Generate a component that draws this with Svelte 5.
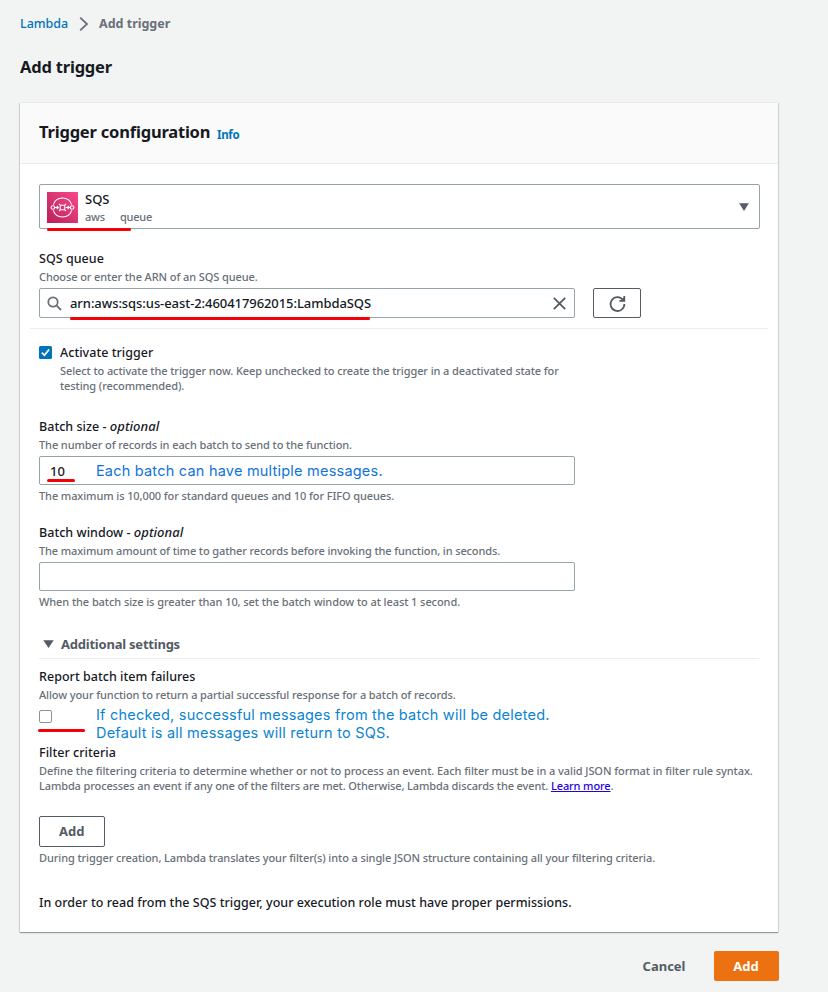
<script>
  let queueArn = $state('arn:aws:sqs:us-east-2:460417962015:LambdaSQS');
</script>

<main>
  <nav class="crumbs">
    <a href="#lambda">Lambda</a>
    <svg width="10" height="16" viewBox="0 0 10 16"><path d="M1.2 1.6 8 8 1.2 14.4" fill="none" stroke="#687078" stroke-width="1.8" /></svg>
    <span>Add trigger</span>
  </nav>
  <h1>Add trigger</h1>

  <section class="card">
    <header>
      <h2>Trigger configuration</h2>
      <a href="#info">Info</a>
    </header>

    <div class="body">
      <div class="select">
        <svg class="logo" width="31" height="31" viewBox="0 0 31 31">
          <defs>
            <linearGradient id="pink" x1="0" y1="1" x2="1" y2="0">
              <stop offset="0" stop-color="#b91f5c" />
              <stop offset="1" stop-color="#f8498b" />
            </linearGradient>
          </defs>
          <rect width="31" height="31" fill="url(#pink)" />
          <g fill="none" stroke="#fff" stroke-width="1.1">
            <path d="M6.3 12.6a9.7 9.7 0 0 1 18.4 0M6.3 18.4a9.7 9.7 0 0 0 18.4 0" />
            <circle cx="5.9" cy="15.5" r="1.8" />
            <circle cx="25.1" cy="15.5" r="1.8" />
            <path d="M7.7 15.5h3.6M9.8 14l1.5 1.5-1.5 1.5M18.8 15.5h4.2M20.7 14l1.5 1.5-1.5 1.5" />
            <path d="M12 12l1.5 1.3h4L19 12M12 19l1.5-1.3h4L19 19M13.2 13v5M17.8 13v5" />
          </g>
        </svg>
        <div class="choice">
          <strong>SQS</strong>
          <span class="tags"><span>aws</span><span>queue</span></span>
        </div>
        <svg width="10" height="8" viewBox="0 0 10 8"><path d="M0.6 0.4h8.8L5 7.6z" fill="#545b64" stroke="#545b64" stroke-width=".6" stroke-linejoin="round" /></svg>
        <i class="mark m1"></i>
      </div>

      <div class="label l-queue">SQS queue</div>
      <div class="desc">Choose or enter the ARN of an SQS queue.</div>
      <div class="row">
        <div class="input search">
          <svg width="15" height="15" viewBox="0 0 15 15" fill="none" stroke="#687078" stroke-width="1.8"><circle cx="6" cy="6" r="4.7" /><path d="M9.4 9.4 14 14" /></svg>
          <span class="arn">{queueArn}</span>
          <svg width="13" height="13" viewBox="0 0 13 13"><path d="M.8.8l11.4 11.4M12.2.8.8 12.2" stroke="#545b64" stroke-width="1.8" /></svg>
          <i class="mark m2"></i>
        </div>
        <button class="refresh" aria-label="Refresh">
          <svg width="17" height="17" viewBox="0 0 17 17"><path d="M14.2 5.2A6.9 6.9 0 1 0 15.4 9" fill="none" stroke="#545b64" stroke-width="1.8" /><path d="M15.3 1v4.9H10.4" fill="none" stroke="#545b64" stroke-width="1.8" /><path d="M15 2.2v3.5h-3.4z" fill="#545b64" /></svg>
        </button>
      </div>

      <hr class="wide" />

      <div class="activate">
        <svg width="13" height="13" viewBox="0 0 13 13"><rect width="13" height="13" rx="1.5" fill="#0073bb" /><path d="M2.8 6.6 5.4 9.2 10.2 3.4" fill="none" stroke="#fff" stroke-width="1.7" /></svg>
        <div>
          <div class="label">Activate trigger</div>
          <div class="desc two">Select to activate the trigger now. Keep unchecked to create the trigger in a deactivated state for<br />testing (recommended).</div>
        </div>
      </div>

      <div class="field">
        <div class="label">Batch size - <em>optional</em></div>
        <div class="desc">The number of records in each batch to send to the function.</div>
        <div class="input">
          <span class="num">10</span>
          <span class="note n1">Each batch can have multiple messages.</span>
          <i class="mark m3"></i>
        </div>
        <div class="desc hint">The maximum is 10,000 for standard queues and 10 for FIFO queues.</div>
      </div>

      <div class="field second">
        <div class="label">Batch window - <em>optional</em></div>
        <div class="desc tight">The maximum amount of time to gather records before invoking the function, in seconds.</div>
        <div class="input"></div>
        <div class="desc hint wider">When the batch size is greater than 10, set the batch window to at least 1 second.</div>
      </div>

      <div class="expander">
        <svg width="11" height="8" viewBox="0 0 11 8"><path d="M0.8 0.4h9.4L5.5 7.6z" fill="#545b64" stroke="#545b64" stroke-width=".6" stroke-linejoin="round" /></svg>
        <span>Additional settings</span>
      </div>

      <div class="label l-report">Report batch item failures</div>
      <div class="desc">Allow your function to return a partial successful response for a batch of records.</div>
      <div class="report">
        <span class="box"></span>
        <div class="note">If checked, successful messages from the batch will be deleted.<br />Default is all messages will return to SQS.</div>
        <i class="mark m4"></i>
      </div>

      <div class="label">Filter criteria</div>
      <div class="desc two filter"><span class="loose">Define the filtering criteria to determine whether or not to process an event. Each filter must be in a valid JSON format in filter rule syntax.</span><br /><span class="snug">Lambda processes an event if any one of the filters are met. Otherwise, Lambda discards the event. <a href="#learn">Learn more</a>.</span></div>
      <button class="add">Add</button>
      <div class="desc hint">During trigger creation, Lambda translates your filter(s) into a single JSON structure containing all your filtering criteria.</div>
      <div class="label role">In order to read from the SQS trigger, your execution role must have proper permissions.</div>
    </div>
  </section>

  <footer>
    <button class="cancel">Cancel</button>
    <button class="primary">Add</button>
  </footer>
</main>

<style>
  :global(body) { background: #f2f3f3; }
  main {
    box-sizing: border-box;
    width: 828px;
    height: 992px;
    padding: 14px 49.5px 0 20px;
    overflow: hidden;
    background: #f2f3f3;
    color: #16191f;
    font-family: "Noto Sans", "Open Sans", sans-serif;
    font-size: 13px;
    white-space: nowrap;
  }
  button { font: inherit; padding: 0; }
  .crumbs { display: flex; align-items: center; height: 19px; line-height: 19px; font-size: 12.5px; }
  .crumbs a { color: #0073bb; text-decoration: none; width: 48px; font-weight: 500; letter-spacing: -0.05px; }
  .crumbs svg { margin: 0 10px 0 11px; }
  .crumbs span { color: #687078; font-weight: 700; }
  h1 { margin: 22px 0 0; font-size: 16.5px; line-height: 24px; font-weight: 700; letter-spacing: -0.2px; }
  .card {
    box-sizing: border-box;
    width: 758px;
    height: 829px;
    margin-top: 24px;
    background: #fff;
    box-shadow: 0 1px 1px #8f9c9c, 1px 0 1px #d9dede, -1px 0 1px #d5dbdb;
  }
  header { display: flex; align-items: baseline; height: 60px; padding: 0 19px; background: #fafafa; border-bottom: 1px solid #eaeded; }
  h2 { margin: 0; font-size: 16.5px; line-height: 58px; font-weight: 700; width: 178px; letter-spacing: -0.2px; }
  header a { color: #0073bb; font-size: 11.5px; font-weight: 700; text-decoration: none; letter-spacing: -0.3px; position: relative; top: 0.5px; }
  .body { display: flex; flex-direction: column; padding: 20px 19px 0; }
  .select { position: relative; box-sizing: border-box; display: flex; align-items: center; height: 45px; width: 720.5px; padding: 0 10px 0 7px; border: 1px solid #95a5a6; border-radius: 2px; }
  .select .logo { margin-right: 7px; margin-top: 2px; }
  .choice { flex: 1; display: flex; flex-direction: column; padding-top: 2px; }
  .choice strong { font-weight: 500; line-height: 18px; }
  .tags { display: flex; gap: 15px; color: #687078; font-size: 11px; font-weight: 500; line-height: 18px; letter-spacing: -0.2px; }
  .label { line-height: 18px; height: 18px; font-weight: 500; font-size: 12.5px; letter-spacing: 0.03px; }
  .label em { font-size: 13px; }
  .l-queue { margin-top: 21px; }
  .desc { line-height: 18px; font-size: 11px; font-weight: 500; letter-spacing: -0.1px; color: #687078; }
  .tight { letter-spacing: -0.12px; }
  .loose { letter-spacing: -0.08px; }
  .snug { letter-spacing: -0.12px; }
  .wider { letter-spacing: -0.08px; }
  .two { line-height: 15px; }
  .row { display: flex; gap: 19px; margin-top: 2px; }
  .input { position: relative; box-sizing: border-box; display: flex; align-items: center; width: 535.5px; height: 29px; margin-top: 2px; border: 1px solid #95a5a6; border-radius: 2px; }
  .search { height: 30px; margin: 0 0 1px; padding: 0 8px 0 7px; }
  .arn { flex: 1; margin-left: 8px; font-size: 13px; font-weight: 500; letter-spacing: -0.07px; }
  .refresh { display: flex; align-items: center; justify-content: center; box-sizing: border-box; width: 48px; height: 30px; margin-left: -0.5px; border: 1px solid #545b64; border-radius: 2px; background: #fff; }
  .wide { width: 738px; margin: 9px 0 0 -9px; border: 0; border-top: 1px solid #eaeded; flex: none; }
  .activate { display: flex; gap: 8px; margin-top: 15px; }
  .activate svg { margin-top: 2px; }
  .activate .two { margin-top: 1px; }
  .field { margin-top: 24px; }
  .field .desc:nth-child(2) { margin-top: 1px; }
  .field.second { margin-top: 18px; }
  .hint { margin-top: 2px; }
  .num { margin-left: 10px; font-size: 13px; font-weight: 500; }
  .note { font-family: Inter, sans-serif; font-size: 14.5px; line-height: 18px; color: #0a84d0; letter-spacing: 0.22px; }
  .n1 { margin-left: 31px; color: #0f74d6; }
  .expander { display: flex; align-items: center; gap: 7px; height: 29px; margin-top: 18px; padding-left: 4px; border-bottom: 1px solid #eaeded; width: 716px; color: #545b64; font-weight: 700; letter-spacing: -0.22px; }
  .l-report { margin-top: 9px; }
  .report { position: relative; display: flex; height: 40px; padding-top: 2px; box-sizing: border-box; }
  .box { box-sizing: border-box; width: 13px; height: 13px; margin: 4px 44px 0 0; border: 1px solid #879596; border-radius: 2px; }
  .mark { position: absolute; height: 3px; border-radius: 1.5px; background: #f40009; }
  .m1 { left: 7px; top: 43px; width: 84px; }
  .m2 { left: 30px; top: 28px; width: 300px; }
  .m3 { left: 7px; top: 22px; width: 28px; }
  .m4 { left: -1px; top: 25px; width: 47px; }
  .filter { margin-top: 1px; }
  .desc a { color: #1f00e0; }
  .add { align-self: flex-start; box-sizing: border-box; width: 65.5px; height: 31px; padding-bottom: 1px; margin-top: 23px; border: 1px solid #545b64; border-radius: 2px; background: #fff; color: #545b64; font-weight: 700; }
  .role { margin-top: 27px; }
  footer { display: flex; justify-content: flex-end; margin-top: 19px; height: 30px; }
  footer button { border: 0; font-weight: 700; background: none; color: #545b64; }
  .cancel { margin-right: 28px; }
  .primary { width: 65px; border-radius: 2px; background: #ec7211; color: #fff; }
</style>
